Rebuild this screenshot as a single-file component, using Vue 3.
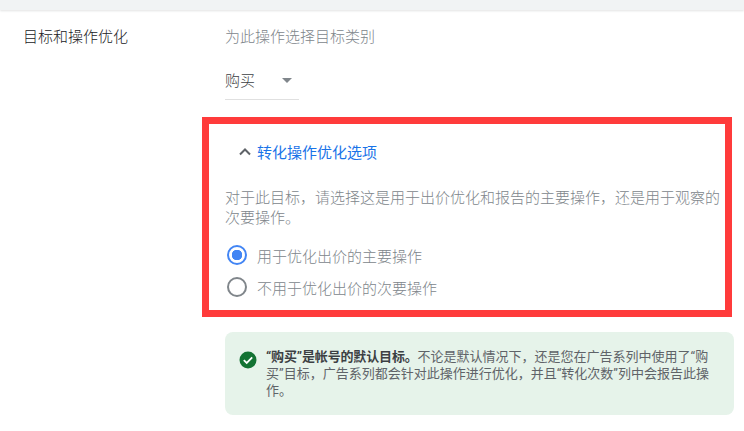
<script setup>
const options = [
  { label: '用于优化出价的主要操作', checked: true },
  { label: '不用于优化出价的次要操作', checked: false },
]
</script>

<template>
  <div class="page">
    <div class="topbar"></div>
    <div class="row">
      <div class="label">目标和操作优化</div>
      <div class="content">
        <div class="hint">为此操作选择目标类别</div>
        <div class="select">
          <span>购买</span>
          <i class="caret"></i>
        </div>
        <section class="highlight">
          <div class="toggle">
            <svg class="chev" viewBox="0 0 14 9" width="14" height="9">
              <path d="M2 7.5 L7 2.5 L12 7.5" fill="none" stroke="#5f6368" stroke-width="2" />
            </svg>
            <span>转化操作优化选项</span>
          </div>
          <p class="desc">对于此目标，请选择这是用于出价优化和报告的主要操作，还是用于观察的<br />次要操作。</p>
          <div class="radios">
            <div v-for="o in options" :key="o.label" class="radio-row">
              <span class="radio" :class="{ on: o.checked }"></span>
              <span>{{ o.label }}</span>
            </div>
          </div>
        </section>
        <div class="notice">
          <svg class="check" viewBox="0 0 18 18" width="18" height="18">
            <circle cx="9" cy="9" r="8.5" fill="#137333" />
            <path d="M4.8 9.2 L7.7 12 L13.2 6.4" fill="none" stroke="#fff" stroke-width="1.8" />
          </svg>
          <p><b>“购买”是帐号的默认目标。</b>不论是默认情况下，还是您在广告系列中使用了“购<br />买”目标，广告系列都会针对此操作进行优化，并且“转化次数”列中会报告此操<br />作。</p>
        </div>
      </div>
    </div>
  </div>
</template>

<style scoped>
.page {
  width: 744px;
  height: 431px;
  overflow: hidden;
  background: #fff;
  font-family: "Roboto", "Noto Sans CJK SC", sans-serif;
  font-size: 15px;
  font-weight: 300;
  color: #5f6368;
}
.topbar {
  height: 10px;
  background: #f1f3f4;
  box-shadow: 0 1px 2px rgba(60, 64, 67, 0.15);
}
.row {
  display: flex;
}
.label {
  width: 179px;
  margin-left: 23px;
  padding-top: 17px;
  line-height: 20px;
  color: #202124;
}
.content {
  width: 532px;
}
.hint {
  margin-left: 23px;
  padding-top: 17px;
  line-height: 20px;
  color: #80868b;
}
.select {
  margin: 14px 0 0 23px;
  width: 74px;
  height: 39px;
  box-sizing: border-box;
  display: flex;
  align-items: center;
  border-bottom: 1px solid #e0e0e0;
  color: #3c4043;
  padding-bottom: 1px;
}
.caret {
  margin: 2px 0 0 27px;
  width: 0;
  height: 0;
  border-left: 5px solid transparent;
  border-right: 5px solid transparent;
  border-top: 5px solid #80868b;
}
.highlight {
  margin-top: 17px;
  width: 530px;
  height: 200px;
  box-sizing: border-box;
  border: 7px solid #ff3b3b;
  padding: 0 0 0 16px;
}
.toggle {
  display: flex;
  align-items: center;
  height: 20px;
  margin-top: 17px;
  color: #1a73e8;
  font-weight: 400;
}
.chev {
  margin: 0 5px 0 13px;
}
.desc {
  margin: 27px 0 0;
  line-height: 20px;
  color: #80868b;
  white-space: nowrap;
}
.radios {
  margin-top: 11px;
}
.radio-row {
  display: flex;
  align-items: center;
  height: 32px;
  color: #80868b;
}
.radio {
  box-sizing: border-box;
  width: 20px;
  height: 20px;
  margin: 0 10px 0 2px;
  border: 2px solid #80868b;
  border-radius: 50%;
  background: #fff;
}
.radio.on {
  border-color: #4285f4;
  background: radial-gradient(circle, #4285f4 0 5px, #fff 5.5px);
}
.notice {
  margin: 15px 0 0 23px;
  width: 509px;
  height: 83px;
  box-sizing: border-box;
  padding: 16px 14px 0 14px;
  display: flex;
  background: #e6f3ea;
  border-radius: 8px;
}
.check {
  flex: none;
  margin: 3px 9px 0 0;
}
.notice p {
  margin: 0;
  font-size: 13px;
  font-weight: 400;
  line-height: 17px;
  color: #5f6368;
  white-space: nowrap;
}
.notice b {
  font-weight: 700;
  color: #3c4043;
  letter-spacing: -0.15px;
}
</style>
